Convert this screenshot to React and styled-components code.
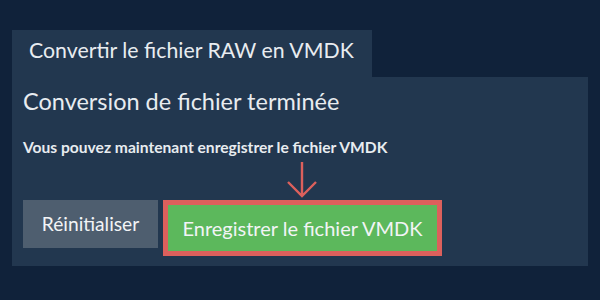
import React from "react";
import styled, { createGlobalStyle } from "styled-components";

const Global = createGlobalStyle`
  html, body { margin: 0; padding: 0; }
  body {
    background: #10223a;
    font-family: Lato, "Open Sans", sans-serif;
    width: 600px;
    height: 300px;
    overflow: hidden;
  }
`;

const Page = styled.div`
  padding: 30px 12px 0 12px;
  display: flex;
  flex-direction: column;
  align-items: flex-start;
`;

const Tab = styled.div`
  width: 360px;
  height: 47px;
  box-sizing: border-box;
  background: #22374f;
  color: #e8ecf0;
  font-size: 21.3px;
  line-height: 26px;
  padding: 7px 0 0 17px;
  white-space: nowrap;
`;

const Panel = styled.div`
  width: 576px;
  height: 189px;
  box-sizing: border-box;
  background: #22374f;
  padding: 9px 10px 0 11px;
  display: flex;
  flex-direction: column;
`;

const Heading = styled.h1`
  margin: 0;
  font-size: 23.5px;
  font-weight: 400;
  line-height: 30px;
  color: #e8ecf0;
  white-space: nowrap;
`;

const Message = styled.p`
  margin: 22px 0 0 0;
  font-size: 15.6px;
  font-weight: 700;
  line-height: 19px;
  color: #e8ecf0;
  white-space: nowrap;
`;

const Actions = styled.div`
  display: flex;
  align-items: flex-start;
  gap: 5px;
  margin-top: 43px;
`;

const Button = styled.button`
  box-sizing: border-box;
  border: none;
  margin: 0;
  font-family: Lato, "Open Sans", sans-serif;
  line-height: 24px;
  color: #f2f4f6;
  display: flex;
  align-items: center;
  justify-content: center;
  padding: 0;
  cursor: pointer;
`;

const ResetButton = styled(Button)`
  width: 135px;
  height: 48px;
  background: #4e5e6f;
  font-size: 19.2px;
`;

const SaveWrap = styled.div`
  position: relative;
`;

const SaveButton = styled(Button)`
  width: 279px;
  height: 56px;
  background: #5cb85c;
  border: 5px solid #dc605c;
  font-size: 20px;
`;

const Arrow = styled.svg`
  position: absolute;
  left: 124px;
  top: -39px;
`;

export default function App() {
  return (
    <>
      <Global />
      <Page>
        <Tab>Convertir le fichier RAW en VMDK</Tab>
        <Panel>
          <Heading>Conversion de fichier terminée</Heading>
          <Message>Vous pouvez maintenant enregistrer le fichier VMDK</Message>
          <Actions>
            <ResetButton>Réinitialiser</ResetButton>
            <SaveWrap>
              <Arrow width="32" height="38" viewBox="0 0 32 38">
                <path
                  d="M15 1 V35 M1 21 L15 35 L29 21"
                  fill="none"
                  stroke="#dc605c"
                  strokeWidth="2.4"
                />
              </Arrow>
              <SaveButton>Enregistrer le fichier VMDK</SaveButton>
            </SaveWrap>
          </Actions>
        </Panel>
      </Page>
    </>
  );
}
